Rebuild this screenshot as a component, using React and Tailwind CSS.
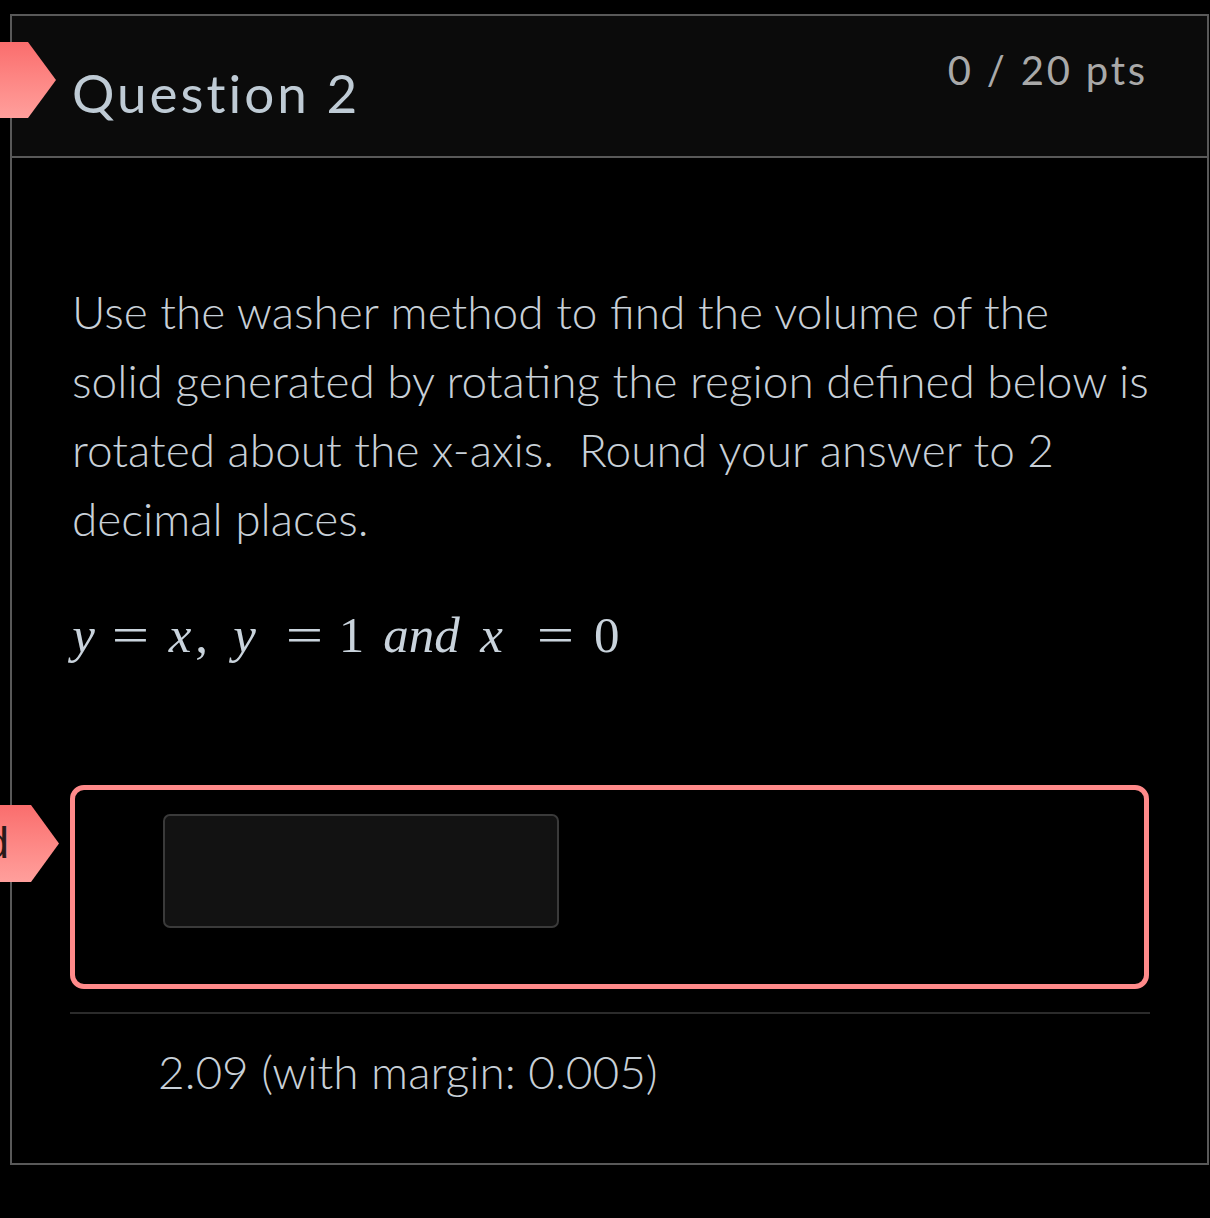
import React from "react";

function Tag({ top, height, tip, children }) {
  return (
    <div
      className="absolute left-0 bg-gradient-to-b from-[#fa6d6d] to-[#ff9f9c] overflow-hidden"
      style={{
        top,
        height,
        width: tip,
        clipPath: `polygon(0 0, ${tip - 28}px 0, ${tip}px 50%, ${tip - 28}px 100%, 0 100%)`,
      }}
    >
      {children}
    </div>
  );
}

function M({ w, italic, wide, children }) {
  return (
    <span
      className={
        "inline-block text-center shrink-0 " + (italic ? "italic " : "")
      }
      style={{ width: w }}
    >
      {wide ? <span className="inline-block scale-x-[1.3]">{children}</span> : children}
    </span>
  );
}

export default function App() {
  const lato = { fontFamily: "Lato, 'Open Sans', sans-serif" };
  const serif = { fontFamily: "'Liberation Serif', 'DejaVu Serif', serif" };
  return (
    <div className="relative w-[1210px] h-[1218px] bg-black overflow-hidden pt-[14px] pl-[10px]" style={lato}>
      <div className="w-[1199px] border-2 border-[#595959]">
        {/* header */}
        <div className="h-[142px] bg-[#0b0b0b] border-b-2 border-[#595959] flex justify-between pl-[60px] pr-[59px]">
          <div className="mt-[47px] text-[53px] leading-[60px] tracking-[3px] text-[#bfcbd5]">Question 2</div>
          <div className="mt-[30px] text-[40px] leading-[48px] tracking-[2.8px] text-[#a9a9a9]">0 / 20 pts</div>
        </div>
        {/* body */}
        <div className="pt-[119px] pb-[57px]">
          <div className="px-[60px] text-[46px] leading-[69px] font-light text-[#c8d0d8] whitespace-nowrap">
            Use the washer method to find the volume of the
            <br />
            solid generated by rotating the region defined below is
            <br />
            rotated about the x-axis.&nbsp; Round your answer to 2
            <br />
            decimal places.
          </div>
          <div
            className="mt-[48px] px-[60px] flex items-baseline text-[51px] leading-[69px] text-[#c9d3dc] whitespace-nowrap"
            style={serif}
          >
            <M w={23} italic>y</M>
            <M w={70} wide>=</M>
            <M w={30} italic>x</M>
            <M w={13}>,</M>
            <M w={73} italic>y</M>
            <M w={46} wide>=</M>
            <M w={49}>1</M>
            <M w={91} italic>and</M>
            <M w={49} italic>x</M>
            <M w={78} wide>=</M>
            <M w={15}>0</M>
          </div>
          <div className="mt-[115px] ml-[58px] w-[1079px] h-[204px] border-[5px] border-[#ff8a8a] rounded-[14px] pt-[24px] pl-[88px]">
            <div className="w-[396px] h-[114px] bg-[#121212] border-2 border-[#3a3a3a] rounded-[7px]" />
          </div>
          <div className="mt-[23px] ml-[58px] w-[1080px] h-[2px] bg-[#2b2b2b]" />
          <div className="mt-[23px] pl-[146px] text-[46px] leading-[69px] font-light text-[#c8d0d8]">
            2.09 (with margin: 0.005)
          </div>
        </div>
      </div>

      <Tag top={42} height={76} tip={56} />
      <Tag top={805} height={77} tip={59}>
        <div
          className="absolute right-[50px] top-[14px] text-[44px] leading-[48px] text-[#2a1a1a] whitespace-nowrap"
          style={{ fontFamily: "'Liberation Sans', Arial, sans-serif" }}
        >
          Unanswered
        </div>
      </Tag>
    </div>
  );
}
